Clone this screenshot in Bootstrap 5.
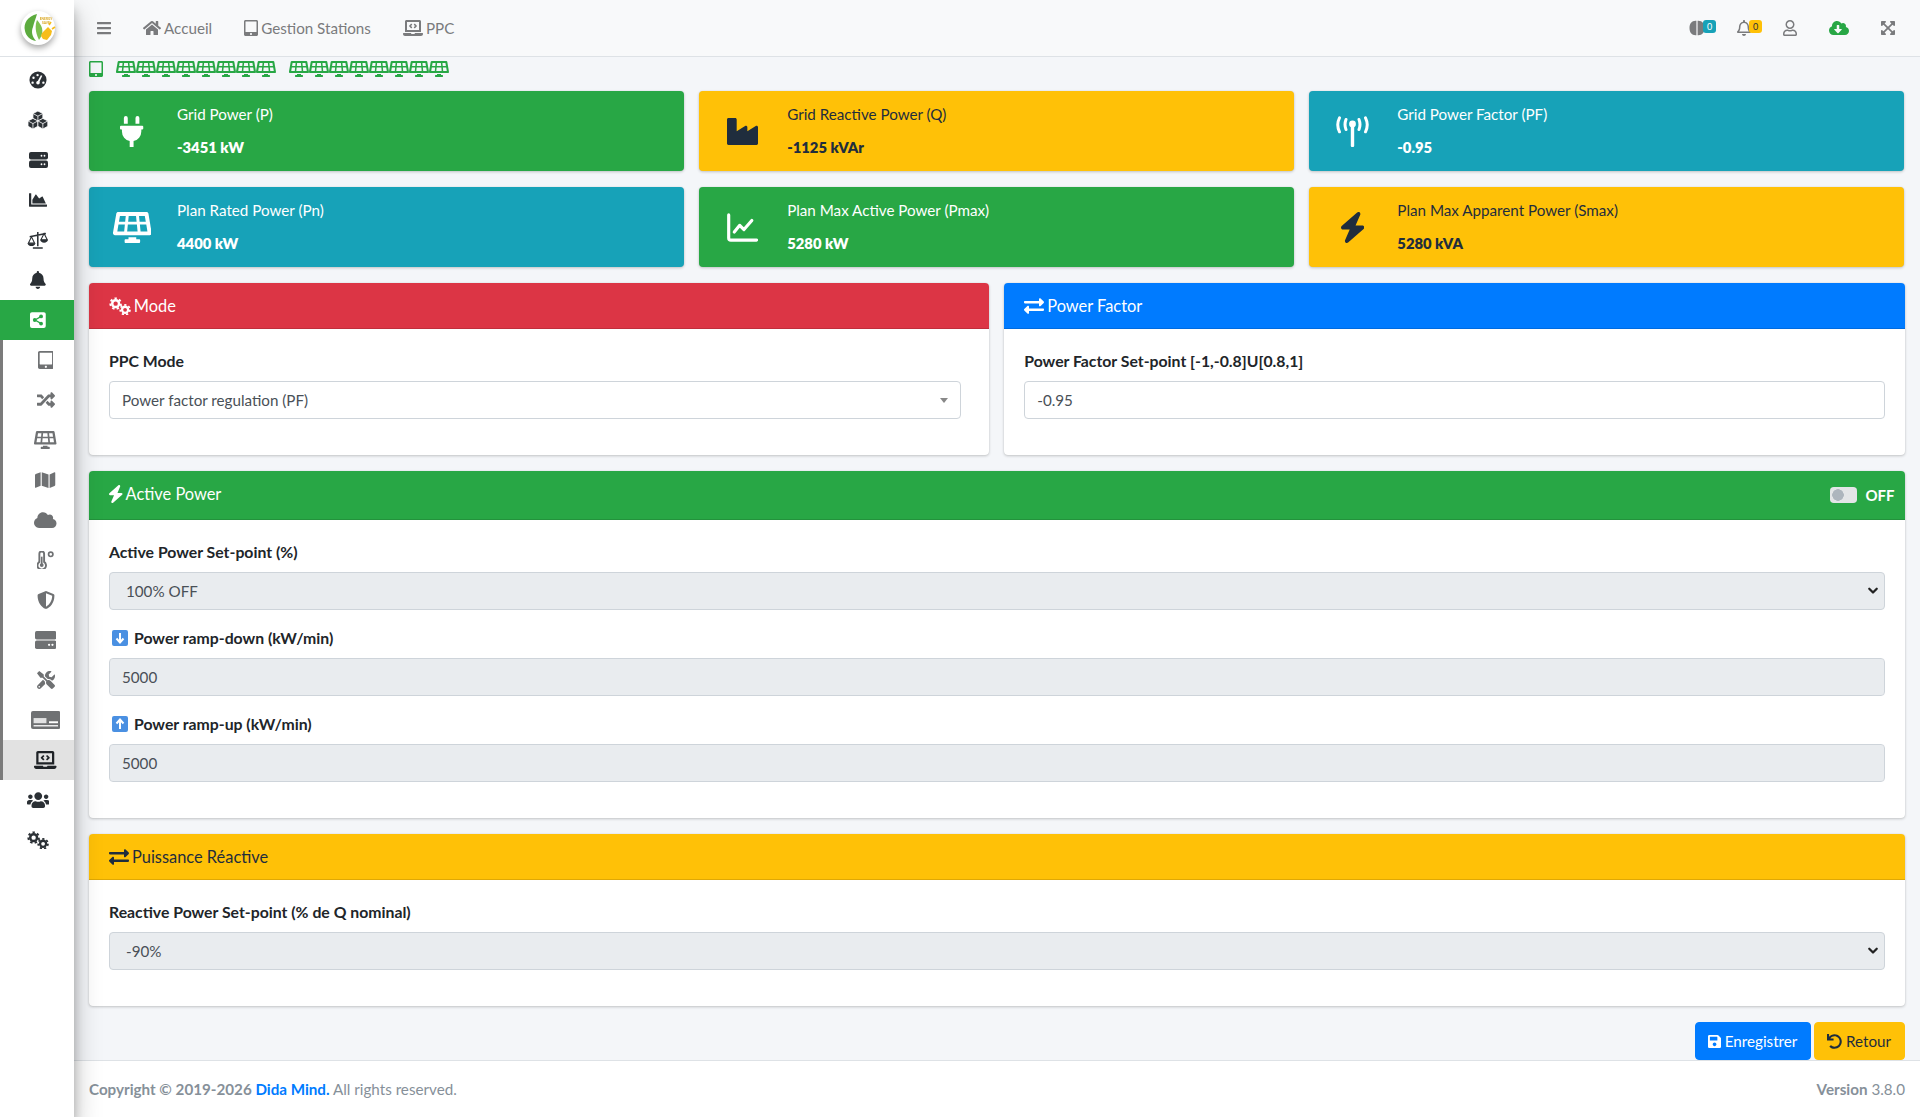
<!DOCTYPE html>
<html lang="fr">
<head>
<meta charset="utf-8">
<title>PPC</title>
<link href="https://cdn.jsdelivr.net/npm/bootstrap@5.3.0/dist/css/bootstrap.min.css" rel="stylesheet">
<style>
html,body{height:100%}
body{font-family:"Lato","Liberation Sans",sans-serif;font-size:15.2px;background:#f4f6f9;color:#212529;overflow:hidden}
.shell{height:1117px}
.rail{width:74px;flex:0 0 74px;background:#fff;box-shadow:0 14px 28px rgba(0,0,0,.25),0 10px 10px rgba(0,0,0,.22);position:relative;z-index:3}
.logo-zone{height:57px;border-bottom:1px solid #dee2e6;margin-bottom:3px;padding-left:2px}
.logo-zone svg{width:36px;height:36px;filter:drop-shadow(0 3px 3px rgba(0,0,0,.35))}
.rail-link{height:40px;padding:0 0 0 2px;color:#2b3035;display:flex;align-items:center;justify-content:center}
.rail-link svg{height:18px;width:auto;display:block}
.rail-link.on{background:#28a745;color:#fff}
.sub-list{border-left:3px solid #7b7b7b}
.sub-list .rail-link{padding-left:14px;color:#6f7173}
.sub-list .rail-link.cur{background:#e2e2e2;color:#1f2327}
.stage{min-width:0}
.topbar{height:57px;padding:0 9px 0 7px;background:#f8f9fa;border-bottom:1px solid #dee2e6}
.topbar .navbar-nav .nav-link{color:#7a7b7d;padding:0 16px;display:flex;align-items:center;gap:3px;position:relative;line-height:24px}
.topbar svg{height:16px;width:auto;display:block}
.topbar .pip{position:absolute;top:0;right:5px;width:13px;height:13px;border-radius:3px;font-size:9px;line-height:13px;text-align:center}
.pip-info{background:#17a2b8;color:#fff}
.pip-warn{background:#ffc107;color:#1f2d3d}
.work{padding:4px 15.5px 0 15px;min-height:0}
.status-line{height:30px;color:#28a745;gap:13px;align-items:flex-start}
.status-line svg{height:16px;width:auto;display:block}
.row.tight{--bs-gutter-x:15px;--bs-gutter-y:16px}
.stat-tile{height:80px;padding:8px;border-radius:4px;box-shadow:0 0 1px rgba(0,0,0,.125),0 1px 3px rgba(0,0,0,.2)}
.tile-icon{width:70px;flex:0 0 70px}
.tile-icon svg{height:31px;width:auto;display:block}
.tile-copy{padding:0 10px;line-height:1.8}
.tile-copy span{line-height:29px}
.tile-copy b{margin-top:4px;display:block;line-height:29px;font-weight:800;font-size:14.8px}
.tone-green{background:#28a745;color:#fff}
.tone-yellow{background:#ffc107;color:#1f2d3d}
.tone-teal{background:#17a2b8;color:#fff}
.tone-red{background:#dc3545;color:#fff}
.tone-blue{background:#007bff;color:#fff}
.panel{--bs-card-border-width:0;--bs-card-border-radius:4px;--bs-card-inner-border-radius:4px;box-shadow:0 0 1px rgba(0,0,0,.125),0 1px 3px rgba(0,0,0,.2);margin-top:16px}
.panel .card-header{padding:12px 20px 12px 20px;border-bottom:1px solid rgba(0,0,0,.125);display:flex;align-items:flex-start;justify-content:space-between}
.panel .card-header.with-toggle{padding-right:10px}
.panel .card-body{padding:20px}
.head-title{font-size:16.4px;line-height:21px;display:flex;align-items:center;gap:3px}
.head-title svg{height:18px;width:auto;display:block}
.head-title svg.wide{height:20px}
.toggle-box{height:24px;gap:8px;font-weight:700;font-size:15px}
.flip{width:27px;height:16px;margin:0;border:0;border-radius:8px;background-color:#e3e5e7;background-image:radial-gradient(circle at 8px 50%,#adb5bd 5.5px,transparent 6px)}
.field{margin-bottom:16px}
.field label{font-weight:700;font-size:15.8px;margin-bottom:8px;line-height:24px;display:flex;align-items:center;gap:6px}
.field label svg{width:16px;height:16px;margin-left:3px}
.form-control,.form-select{height:38px;font-size:15.2px;color:#495057;border-color:#ced4da;border-radius:4px}
.form-control{padding:6px 12px}
.form-select{padding-left:16px;--bs-form-select-bg-img:url("data:image/svg+xml,%3csvg xmlns='http://www.w3.org/2000/svg' viewBox='0 0 16 16'%3e%3cpath fill='none' stroke='%23222' stroke-linecap='round' stroke-linejoin='round' stroke-width='3' d='m3 5 5 5 5-5'/%3e%3c/svg%3e");background-position:right 5px center;background-size:12px 12px}
.form-control:disabled,.form-select:disabled{background-color:#e9ecef;color:#495057}
.pick-box{display:flex;align-items:center;justify-content:space-between;width:calc(100% - 8px)}
.caret{width:0;height:0;border-left:4px solid transparent;border-right:4px solid transparent;border-top:5px solid #888;margin-right:0}
.action-line{margin-top:16px;gap:3px}
.action-line .btn{height:38px;font-size:15.2px;border-radius:4px;display:flex;align-items:center;gap:4px;padding:0 12px}
.action-line svg{height:15px;width:auto;display:block}
.btn-save{--bs-btn-bg:#007bff;--bs-btn-border-color:#007bff;width:116px;justify-content:center}
.btn-back{--bs-btn-bg:#ffc107;--bs-btn-border-color:#ffc107;--bs-btn-color:#1f2d3d;width:91px;justify-content:center}
.foot{height:57px;background:#fff;border-top:1px solid #dee2e6;padding:1px 15px 0;color:#869099}
.foot a{color:#007bff;text-decoration:none;font-weight:700}
</style>
</head>
<body>
<svg width="0" height="0" class="position-absolute">
<defs>
<path id="i-bolt" d="M240.5 224H352C365.3 224 377.3 232.3 381.1 244.7 387.7 257.1 383.1 271.1 373.1 280.1L117.1 504.1C105.8 513.9 89.27 514.7 77.19 506.1 65.1 497.4 60.7 481.5 66.59 467.8L143.5 288H31.1C18.67 288 6.733 279.7 2.044 267.3-2.645 254.9 .8944 240.9 10.93 231.9L266.9 7.918C278.2-1.92 294.7-2.669 306.8 5.111 318.9 14.6 323.3 30.5 317.4 44.2L240.5 224z"/>
<path id="i-home" d="M280.37 148.26L96 300.11V464a16 16 0 0 0 16 16l112.06-.29a16 16 0 0 0 15.92-16V368a16 16 0 0 1 16-16h64a16 16 0 0 1 16 16v95.64a16 16 0 0 0 16 16.05L464 480a16 16 0 0 0 16-16V300L295.67 148.26a12.19 12.19 0 0 0-15.3 0zM571.6 251.47L488 182.56V44.05a12 12 0 0 0-12-12h-56a12 12 0 0 0-12 12v72.61L318.47 43a48 48 0 0 0-61 0L4.34 251.47a12 12 0 0 0-1.6 16.9l25.5 31A12 12 0 0 0 45.15 301l235.22-193.74a12.19 12.19 0 0 1 15.3 0L530.9 301a12 12 0 0 0 16.9-1.6l25.5-31a12 12 0 0 0-1.7-16.93z"/>
<path id="i-bars" d="M16 132h416c8.837 0 16-7.163 16-16V76c0-8.837-7.163-16-16-16H16C7.163 60 0 67.163 0 76v40c0 8.837 7.163 16 16 16zm0 160h416c8.837 0 16-7.163 16-16v-40c0-8.837-7.163-16-16-16H16c-8.837 0-16 7.163-16 16v40c0 8.837 7.163 16 16 16zm0 160h416c8.837 0 16-7.163 16-16v-40c0-8.837-7.163-16-16-16H16c-8.837 0-16 7.163-16 16v40c0 8.837 7.163 16 16 16z"/>
<path id="i-swap" d="M0 168v-16c0-13.255 10.745-24 24-24h360V80c0-21.367 25.899-32.042 40.971-16.971l80 80c9.372 9.373 9.372 24.569 0 33.941l-80 80C409.956 271.982 384 261.456 384 240v-48H24c-13.255 0-24-10.745-24-24zm488 152H128v-48c0-21.314-25.862-32.08-40.971-16.971l-80 80c-9.372 9.373-9.372 24.569 0 33.941l80 80C102.057 463.997 128 453.437 128 432v-48h360c13.255 0 24-10.745 24-24v-16c0-13.255-10.745-24-24-24z"/>
<path id="i-save" d="M433.941 129.941l-83.882-83.882A48 48 0 0 0 316.118 32H48C21.49 32 0 53.49 0 80v352c0 26.51 21.49 48 48 48h352c26.51 0 48-21.49 48-48V163.882a48 48 0 0 0-14.059-33.941zM224 416c-35.346 0-64-28.654-64-64 0-35.346 28.654-64 64-64s64 28.654 64 64c0 35.346-28.654 64-64 64zm96-304.52V212c0 6.627-5.373 12-12 12H76c-6.627 0-12-5.373-12-12V108c0-6.627 5.373-12 12-12h228.52c3.183 0 6.235 1.264 8.485 3.515l3.48 3.48A11.996 11.996 0 0 1 320 111.48z"/>
<path id="i-undo" d="M212.333 224.333H12c-6.627 0-12-5.373-12-12V12C0 5.373 5.373 0 12 0h48c6.627 0 12 5.373 12 12v78.112C117.773 39.279 184.26 7.47 258.175 8.007c136.906.994 246.448 111.623 246.157 248.532C504.041 393.258 393.12 504 256.333 504c-64.089 0-122.496-24.313-166.51-64.215-5.099-4.622-5.334-12.554-.467-17.42l33.967-33.967c4.474-4.474 11.662-4.717 16.401-.525C170.76 415.336 211.58 432 256.333 432c97.268 0 176-78.716 176-176 0-97.267-78.716-176-176-176-58.496 0-110.28 28.476-142.274 72.333h98.274c6.627 0 12 5.373 12 12v48c0 6.627-5.373 12-12 12z"/>
<path id="i-cloud" d="M537.6 226.6c4.1-10.7 6.4-22.4 6.4-34.6 0-53-43-96-96-96-19.7 0-38.1 6-53.3 16.2C367 64.2 315.3 32 256 32c-88.4 0-160 71.6-160 160 0 2.7.1 5.4.2 8.1C40.2 219.8 0 273.2 0 336c0 79.5 64.5 144 144 144h368c70.7 0 128-57.3 128-128 0-61.9-44-113.6-102.4-125.4z"/>
<path id="i-clouddown" d="M537.6 226.6c4.1-10.7 6.4-22.4 6.4-34.6 0-53-43-96-96-96-19.7 0-38.1 6-53.3 16.2C367 64.2 315.3 32 256 32c-88.4 0-160 71.6-160 160 0 2.7.1 5.4.2 8.1C40.2 219.8 0 273.2 0 336c0 79.5 64.5 144 144 144h368c70.7 0 128-57.3 128-128 0-61.9-44-113.6-102.4-125.4zm-132.9 88.7L299.3 420.7c-6.2 6.2-16.4 6.2-22.6 0L171.3 315.3c-10.1-10.1-2.9-27.3 11.3-27.3H248V176c0-8.8 7.2-16 16-16h48c8.8 0 16 7.2 16 16v112h65.4c14.2 0 21.4 17.2 11.3 27.3z"/>
<path id="i-bell" d="M224 512c35.32 0 63.97-28.65 63.97-64H160.03c0 35.35 28.65 64 63.97 64zm215.39-149.71c-19.32-20.76-55.47-51.99-55.47-154.29 0-77.7-54.48-139.9-127.94-155.16V32c0-17.67-14.32-32-31.98-32s-31.98 14.33-31.98 32v20.84C118.56 68.1 64.08 130.3 64.08 208c0 102.3-36.15 133.53-55.47 154.29-6 6.45-8.66 14.16-8.61 21.71.11 16.4 12.98 32 32.1 32h383.8c19.12 0 32-15.6 32.1-32 .05-7.55-2.61-15.27-8.61-21.71z"/>
<path id="i-bello" d="M439.39 362.29c-19.32-20.76-55.47-51.99-55.47-154.29 0-77.7-54.48-139.9-127.94-155.16V32c0-17.67-14.32-32-31.98-32s-31.98 14.33-31.98 32v20.84C118.56 68.1 64.08 130.3 64.08 208c0 102.3-36.15 133.53-55.47 154.29-6 6.45-8.66 14.16-8.61 21.71.11 16.4 12.98 32 32.1 32h383.8c19.12 0 32-15.6 32.1-32 .05-7.55-2.61-15.27-8.61-21.71zM67.53 368c21.22-27.97 44.42-74.33 44.53-159.42 0-.2-.06-.38-.06-.58 0-61.86 50.14-112 112-112s112 50.14 112 112c0 .2-.06.38-.06.58.11 85.1 23.31 131.46 44.53 159.42H67.53zM224 512c35.32 0 63.97-28.65 63.97-64H160.03c0 35.35 28.65 64 63.97 64z"/>
<path id="i-user" d="M313.6 304c-28.7 0-42.5 16-89.6 16-47.1 0-60.8-16-89.6-16C60.2 304 0 364.2 0 438.4V464c0 26.5 21.5 48 48 48h352c26.5 0 48-21.5 48-48v-25.6c0-74.2-60.2-134.4-134.4-134.4zM400 464H48v-25.6c0-47.6 38.8-86.4 86.4-86.4 14.6 0 38.3 16 89.6 16 51.7 0 74.9-16 89.6-16 47.6 0 86.4 38.8 86.4 86.4V464zM224 288c79.5 0 144-64.5 144-144S303.5 0 224 0 80 64.5 80 144s64.5 144 144 144zm0-240c52.9 0 96 43.1 96 96s-43.1 96-96 96-96-43.1-96-96 43.1-96 96-96z"/>
<path id="i-users" d="M96 224c35.3 0 64-28.7 64-64s-28.7-64-64-64-64 28.7-64 64 28.7 64 64 64zm448 0c35.3 0 64-28.7 64-64s-28.7-64-64-64-64 28.7-64 64 28.7 64 64 64zm32 32h-64c-17.6 0-33.5 7.1-45.1 18.6 40.3 22.1 68.9 62 75.1 109.4h66c17.7 0 32-14.3 32-32v-32c0-35.3-28.7-64-64-64zm-256 0c61.9 0 112-50.1 112-112S381.9 32 320 32 208 82.1 208 144s50.1 112 112 112zm76.8 32h-8.3c-20.8 10-43.9 16-68.5 16s-47.6-6-68.5-16h-8.3C179.6 288 128 339.6 128 403.2V432c0 26.5 21.5 48 48 48h288c26.5 0 48-21.5 48-48v-28.8c0-63.6-51.6-115.2-115.2-115.2zm-223.7-13.4C161.5 263.1 145.6 256 128 256H64c-35.3 0-64 28.7-64 64v32c0 17.7 14.3 32 32 32h65.9c6.3-47.4 34.9-87.3 75.2-109.4z"/>
<path id="i-area" d="M500 384c6.6 0 12 5.4 12 12v40c0 6.6-5.4 12-12 12H12c-6.6 0-12-5.4-12-12V76c0-6.6 5.4-12 12-12h40c6.6 0 12 5.4 12 12v308h436zM372.7 159.5L288 216l-85.3-113.7c-5.1-6.8-15.5-6.3-19.9 1L96 248v104h384l-89.9-187.8c-3.2-6.5-11.4-8.7-17.4-4.7z"/>
<path id="i-industry" d="M475.115 163.781L336 252.309v-68.28c0-18.916-20.931-30.399-36.885-20.248L160 252.309V56c0-13.255-10.745-24-24-24H24C10.745 32 0 42.745 0 56v400c0 13.255 10.745 24 24 24h464c13.255 0 24-10.745 24-24V184.029c0-18.917-20.931-30.399-36.885-20.248z"/>
<path id="i-plug" d="M320,32a32,32,0,0,0-64,0v96h64Zm48,128H16A16,16,0,0,0,0,176v32a16,16,0,0,0,16,16H32v32A160.07,160.07,0,0,0,160,412.8V512h64V412.8A160.07,160.07,0,0,0,352,256V224h16a16,16,0,0,0,16-16V176A16,16,0,0,0,368,160ZM128,32a32,32,0,0,0-64,0v96h64Z"/>
<path id="i-solar" d="M431.98 448.01l-47.97.05V416h-128v32.21l-47.98.05c-8.82.01-15.97 7.16-15.98 15.99l-.05 31.73c-.01 8.85 7.17 16.03 16.02 16.02l223.96-.26c8.82-.01 15.97-7.16 15.98-15.98l.04-31.73c.01-8.85-7.17-16.03-16.02-16.02zM585.2 26.74C582.58 11.31 568.99 0 553.06 0H86.93C71 0 57.41 11.31 54.79 26.74-3.32 369.16.04 348.08.03 352c-.03 17.32 14.29 32 32.6 32h574.74c18.23 0 32.51-14.56 32.59-31.79.02-4.08 3.35 16.95-54.76-325.47zM259.83 64h120.33l9.77 96H250.06l9.77-96zm-75.17 256H71.09L90.1 208h105.97l-11.41 112zm16.29-160H98.24l16.29-96h96.19l-9.77 96zm32.82 160l11.4-112h149.65l11.4 112H233.77zm195.5-256h96.19l16.29 96H439.04l-9.77-96zm26.06 256l-11.4-112H549.9l19 112H455.33z"/>
<path id="i-tablet" d="M400 0H48C21.5 0 0 21.5 0 48v416c0 26.5 21.5 48 48 48h352c26.5 0 48-21.5 48-48V48c0-26.5-21.5-48-48-48zM224 480c-17.7 0-32-14.3-32-32s14.3-32 32-32 32 14.3 32 32-14.3 32-32 32zm176-108c0 6.6-5.4 12-12 12H60c-6.6 0-12-5.4-12-12V60c0-6.6 5.4-12 12-12h328c6.6 0 12 5.4 12 12v312z"/>
<path id="i-random" d="M504.971 359.029c9.373 9.373 9.373 24.569 0 33.941l-80 79.984c-15.01 15.01-40.971 4.49-40.971-16.971V416h-58.785a12.004 12.004 0 0 1-8.773-3.812l-70.556-75.596 53.333-57.143L352 336h32v-39.981c0-21.438 25.943-31.998 40.971-16.971l80 79.981zM12 176h84l52.781 56.551 53.333-57.143-70.556-75.596A11.999 11.999 0 0 0 122.785 96H12c-6.627 0-12 5.373-12 12v56c0 6.627 5.373 12 12 12zm372 0v39.984c0 21.46 25.961 31.98 40.971 16.971l80-79.984c9.373-9.373 9.373-24.569 0-33.941l-80-79.981C409.943 24.021 384 34.582 384 56.019V96h-58.785a12.004 12.004 0 0 0-8.773 3.812L96 336H12c-6.627 0-12 5.373-12 12v56c0 6.627 5.373 12 12 12h110.785c3.326 0 6.503-1.381 8.773-3.812L352 176h32z"/>
<path id="i-map" d="M0 117.66v346.32c0 11.32 11.43 19.06 21.94 14.86L160 416V32L20.12 87.95A32.006 32.006 0 0 0 0 117.66zM192 416l192 64V96L192 32v384zM554.06 33.16L416 96v384l139.88-55.95A31.996 31.996 0 0 0 576 394.34V48.02c0-11.32-11.43-19.06-21.94-14.86z"/>
<path id="i-shield" d="M466.5 83.7l-192-80a48.15 48.15 0 0 0-36.9 0l-192 80C27.7 91.1 16 108.6 16 128c0 198.5 114.5 335.7 221.5 380.3 11.8 4.9 25.1 4.9 36.9 0C360.1 472.6 496 349.3 496 128c0-19.4-11.7-36.9-29.5-44.3zM256.1 446.3l-.1-381 175.9 73.3c-3.3 151.4-82.1 261.1-175.8 307.7z"/>
<path id="i-tools" d="M501.1 395.7L384 278.6c-23.1-23.1-57.6-27.6-85.4-13.9L192 158.1V96L64 0 0 64l96 128h62.1l106.6 106.6c-13.6 27.8-9.2 62.3 13.9 85.4l117.1 117.1c14.6 14.6 38.2 14.6 52.7 0l52.7-52.7c14.5-14.6 14.5-38.2 0-52.7zM331.7 225c28.3 0 54.9 11 74.9 31l19.4 19.4c15.8-6.9 30.8-16.5 43.8-29.5 37.1-37.1 49.7-89.3 37.9-136.7-2.2-9-13.5-12.1-20.1-5.5l-74.4 74.4-67.9-11.3L334 98.9l74.4-74.4c6.6-6.6 3.4-17.9-5.7-20.2-47.4-11.7-99.6.9-136.6 37.9-28.5 28.5-41.9 66.1-41.2 103.6l82.1 82.1c8.1-1.9 16.5-2.9 24.7-2.9zm-103.9 82l-56.7-56.7L18.7 402.8c-25 25-25 65.5 0 90.5s65.5 25 90.5 0l123.6-123.6c-7.6-19.9-9.9-41.6-5-62.7zM64 472c-13.2 0-24-10.8-24-24 0-13.3 10.7-24 24-24s24 10.7 24 24c0 13.2-10.7 24-24 24z"/>
<path id="i-laptop" d="M255.03 261.65c6.25 6.25 16.38 6.25 22.63 0l11.31-11.31c6.25-6.25 6.25-16.38 0-22.63L253.25 192l35.71-35.72c6.25-6.25 6.25-16.38 0-22.63l-11.31-11.31c-6.25-6.25-16.38-6.25-22.63 0l-58.34 58.34c-6.25 6.25-6.25 16.38 0 22.63l58.35 58.34zm96.01-11.3l11.31 11.31c6.25 6.25 16.38 6.25 22.63 0l58.34-58.34c6.25-6.25 6.25-16.38 0-22.63l-58.34-58.34c-6.25-6.25-16.38-6.25-22.63 0l-11.31 11.31c-6.25 6.25-6.25 16.38 0 22.63L386.75 192l-35.71 35.72c-6.25 6.25-6.25 16.38 0 22.63zM624 416H381.54c-.74 19.81-14.71 32-32.74 32H288c-18.69 0-33.02-17.47-32.77-32H16c-8.8 0-16 7.2-16 16v16c0 35.2 28.8 64 64 64h512c35.2 0 64-28.8 64-64v-16c0-8.8-7.2-16-16-16zM576 48c0-26.4-21.6-48-48-48H112C85.6 0 64 21.6 64 48v336h512V48zm-64 272H128V64h384v256z"/>
<path id="i-expand" d="M448 344v112a23.94 23.94 0 0 1-24 24H312c-21.39 0-32.09-25.9-17-41l36.2-36.2L224 295.6 116.77 402.9 153 439c15.09 15.1 4.39 41-17 41H24a23.94 23.94 0 0 1-24-24V344c0-21.4 25.89-32.1 41-17l36.19 36.2L184.46 256 77.18 148.7 41 185c-15.1 15.1-41 4.4-41-17V56a23.94 23.94 0 0 1 24-24h112c21.39 0 32.09 25.9 17 41l-36.2 36.2L224 216.4l107.23-107.3L295 73c-15.09-15.1-4.39-41 17-41h112a23.94 23.94 0 0 1 24 24v112c0 21.4-25.89 32.1-41 17l-36.19-36.2L263.54 256l107.28 107.3L407 327.1c15.1-15.2 41-4.5 41 16.9z"/>
<g id="i-cogs">
<circle cx="7" cy="7" r="3.6" fill="none" stroke="currentColor" stroke-width="2.6"/>
<circle cx="7" cy="7" r="5.6" fill="none" stroke="currentColor" stroke-width="2" stroke-dasharray="2.5 2.4"/>
<circle cx="17" cy="13.5" r="3.2" fill="none" stroke="currentColor" stroke-width="2.4"/>
<circle cx="17" cy="13.5" r="5.1" fill="none" stroke="currentColor" stroke-width="1.9" stroke-dasharray="2.3 2.2"/>
</g>
</defs>
</svg>

<div class="shell d-flex">
  <aside class="rail d-flex flex-column">
    <div class="logo-zone d-flex align-items-center justify-content-center">
      <svg viewBox="0 0 36 36">
        <circle cx="18" cy="18" r="17" fill="#fff"/>
        <path d="M17 4C8 6 3 13 5 21c1 5 5 9 11 10-4-5-5-9-3-14 1-5 3-9 4-13z" fill="#5cab3e"/>
        <path d="M17 10c-2 5-2 12 2 20 3-4 4-8 3-12-1-3-3-6-5-8z" fill="#7cc04f"/>
        <path d="M22 23l6-6 4 4-1 4-4 5-4-1-2-3z" fill="#f7bd1b"/>
        <path d="M29 15l2-3M32 19l3-2" stroke="#f7bd1b" stroke-width="1.6"/>
        <text x="26" y="9.5" text-anchor="middle" font-size="3.2" font-weight="700" fill="#d9a51c">ENERGY</text>
        <text x="26" y="13.5" text-anchor="middle" font-size="3.2" font-weight="700" fill="#d9a51c">SAVE</text>
      </svg>
    </div>
    <nav class="nav flex-column flex-nowrap">
      <a class="rail-link nav-link" href="#"><svg viewBox="0 0 20 20" fill="currentColor"><circle cx="10" cy="10" r="9.5"/><path d="M9 12.5L13.2 4.6l1.6.8L10.8 13.500z" fill="#fff"/><circle cx="10" cy="13" r="2" fill="#fff"/><g fill="#fff"><circle cx="4" cy="13" r="1.3"/><circle cx="5" cy="7.500" r="1.300"/><circle cx="9.500" cy="4.500" r="1.300"/><circle cx="16" cy="13" r="1.300"/></g></svg></a>
      <a class="rail-link nav-link" href="#"><svg viewBox="0 0 22 20" fill="currentColor"><g stroke="#fff" stroke-width=".9"><path d="M11 0l5.500 2.800v5.700L11 11.300 5.500 8.500V2.800z"/><path d="M5.500 8.200L11 11v6L5.500 20 0 17v-6z"/><path d="M16.500 8.200L22 11v6l-5.500 3L11 17v-6z"/><path d="M5.500 2.800L11 5.700l5.500-2.900M11 5.700v5.600M0 11l5.500 3 5.500-3M5.500 14v6M11 11l5.500 3 5.500-3M16.500 14v6" fill="none"/></g></svg></a>
      <a class="rail-link nav-link" href="#"><svg viewBox="0 0 19 18" fill="currentColor"><rect y="1" width="19" height="7.500" rx="2"/><rect y="9.500" width="19" height="7.500" rx="2"/><circle cx="12.500" cy="4.750" r=".9" fill="#fff"/><circle cx="15.500" cy="4.750" r=".9" fill="#fff"/><circle cx="12.500" cy="13.250" r=".9" fill="#fff"/><circle cx="15.500" cy="13.250" r=".9" fill="#fff"/></svg></a>
      <a class="rail-link nav-link" href="#"><svg viewBox="0 0 512 512" fill="currentColor"><use href="#i-area"/></svg></a>
      <a class="rail-link nav-link" href="#"><svg viewBox="0 0 24 20" fill="none" stroke="currentColor" stroke-width="1.700"><path d="M12 1v16M6.500 18.800h11M3 6.500L21 2.800"/><path d="M5 6.500L1.500 13.500h7zM19 2.800l-3.500 7h7z" stroke-width="1.200"/><path d="M.8 13.500h8.400c0 2-1.800 3.200-4.200 3.200S.8 15.500.8 13.500zM14.800 9.800h8.400c0 2-1.800 3.200-4.200 3.200s-4.200-1.200-4.200-3.200z" fill="currentColor" stroke="none"/></svg></a>
      <a class="rail-link nav-link" href="#"><svg viewBox="0 0 448 512" fill="currentColor"><use href="#i-bell"/></svg></a>
      <a class="rail-link nav-link on" href="#"><svg viewBox="0 0 448 512"><rect y="32" width="448" height="448" rx="56" fill="#fff"/><g stroke="#28a745" stroke-width="34"><path d="M140 256L310 160M140 256l170 96"/></g><g fill="#28a745"><circle cx="135" cy="256" r="54"/><circle cx="315" cy="155" r="54"/><circle cx="315" cy="357" r="54"/></g></svg></a>
    </nav>
    <nav class="nav flex-column flex-nowrap sub-list">
      <a class="rail-link nav-link" href="#"><svg viewBox="0 0 448 512" fill="currentColor"><use href="#i-tablet"/></svg></a>
      <a class="rail-link nav-link" href="#"><svg viewBox="0 0 512 512" fill="currentColor"><use href="#i-random"/></svg></a>
      <a class="rail-link nav-link" href="#"><svg viewBox="0 0 640 512" fill="currentColor"><use href="#i-solar"/></svg></a>
      <a class="rail-link nav-link" href="#"><svg viewBox="0 0 576 512" fill="currentColor"><use href="#i-map"/></svg></a>
      <a class="rail-link nav-link" href="#"><svg viewBox="0 0 640 512" fill="currentColor"><use href="#i-cloud"/></svg></a>
      <a class="rail-link nav-link" href="#"><svg viewBox="0 0 18 19" fill="none" stroke="currentColor"><path d="M2.500 3a2.500 2.500 0 0 1 5 0v8.500a4.500 4.500 0 1 1-5 0z" stroke-width="2"/><circle cx="5" cy="14.800" r="2" fill="currentColor" stroke="none"/><path d="M5 6v8" stroke-width="1.800"/><circle cx="14.500" cy="3.500" r="2.300" stroke-width="1.800"/></svg></a>
      <a class="rail-link nav-link" href="#"><svg viewBox="0 0 512 512" fill="currentColor"><use href="#i-shield"/></svg></a>
      <a class="rail-link nav-link" href="#"><svg viewBox="0 0 19 16" fill="currentColor"><rect width="19" height="7.500" rx="1.500"/><rect y="8.500" width="19" height="7.500" rx="1.500"/><circle cx="12.500" cy="12.300" r="1" fill="#fff"/><circle cx="15.500" cy="12.300" r="1" fill="#fff"/></svg></a>
      <a class="rail-link nav-link" href="#"><svg viewBox="0 0 512 512" fill="currentColor"><use href="#i-tools"/></svg></a>
      <a class="rail-link nav-link" href="#"><svg viewBox="0 0 23 14" fill="currentColor"><rect width="23" height="14" rx="1.500"/><rect x="2" y="5.500" width="10" height="4" fill="#fff" opacity=".8"/><rect x="14" y="8" width="7" height="1.500" fill="#fff"/><rect x="2" y="11" width="19" height="1" fill="#fff"/></svg></a>
      <a class="rail-link nav-link cur" href="#"><svg viewBox="0 0 640 512" fill="currentColor"><use href="#i-laptop"/></svg></a>
    </nav>
    <nav class="nav flex-column flex-nowrap">
      <a class="rail-link nav-link" href="#"><svg viewBox="0 0 640 512" fill="currentColor"><use href="#i-users"/></svg></a>
      <a class="rail-link nav-link" href="#"><svg viewBox="0 0 23 19" color="#2b3035"><use href="#i-cogs"/></svg></a>
    </nav>
  </aside>

  <div class="stage flex-grow-1 d-flex flex-column">
    <nav class="navbar navbar-expand topbar flex-nowrap justify-content-between">
      <ul class="navbar-nav align-items-center">
        <li class="nav-item"><a class="nav-link" href="#"><svg viewBox="0 0 448 512" fill="currentColor"><use href="#i-bars"/></svg></a></li>
        <li class="nav-item"><a class="nav-link" href="#"><svg viewBox="0 0 576 512" fill="currentColor"><use href="#i-home"/></svg>Accueil</a></li>
        <li class="nav-item"><a class="nav-link" href="#"><svg viewBox="0 0 448 512" fill="currentColor"><use href="#i-tablet"/></svg>Gestion Stations</a></li>
        <li class="nav-item"><a class="nav-link" href="#"><svg viewBox="0 0 640 512" fill="currentColor"><use href="#i-laptop"/></svg>PPC</a></li>
      </ul>
      <ul class="navbar-nav align-items-center">
        <li class="nav-item"><a class="nav-link" href="#"><svg viewBox="0 0 16 16" fill="currentColor"><path d="M7.400 .8C3 .3 .5 3.500 .5 8s2.500 7.700 6.900 7.200zM8.600 .8c4.400-.5 6.900 2.700 6.900 7.200s-2.500 7.700-6.900 7.200z"/></svg><span class="pip pip-info">0</span></a></li>
        <li class="nav-item"><a class="nav-link" href="#"><svg viewBox="0 0 448 512" fill="currentColor"><use href="#i-bello"/></svg><span class="pip pip-warn">0</span></a></li>
        <li class="nav-item"><a class="nav-link" href="#"><svg viewBox="0 0 448 512" fill="currentColor"><use href="#i-user"/></svg></a></li>
        <li class="nav-item"><a class="nav-link" href="#"><svg viewBox="0 0 640 512" fill="#28a745"><use href="#i-clouddown"/></svg></a></li>
        <li class="nav-item"><a class="nav-link" href="#"><svg viewBox="0 0 448 512" fill="currentColor"><use href="#i-expand"/></svg></a></li>
      </ul>
    </nav>

    <main class="work flex-grow-1">
      <div class="status-line d-flex">
        <svg viewBox="0 0 448 512" fill="currentColor"><use href="#i-tablet"/></svg>
        <div class="d-flex">
          <svg viewBox="0 0 640 512" fill="currentColor"><use href="#i-solar"/></svg><svg viewBox="0 0 640 512" fill="currentColor"><use href="#i-solar"/></svg><svg viewBox="0 0 640 512" fill="currentColor"><use href="#i-solar"/></svg><svg viewBox="0 0 640 512" fill="currentColor"><use href="#i-solar"/></svg><svg viewBox="0 0 640 512" fill="currentColor"><use href="#i-solar"/></svg><svg viewBox="0 0 640 512" fill="currentColor"><use href="#i-solar"/></svg><svg viewBox="0 0 640 512" fill="currentColor"><use href="#i-solar"/></svg><svg viewBox="0 0 640 512" fill="currentColor"><use href="#i-solar"/></svg>
        </div>
        <div class="d-flex">
          <svg viewBox="0 0 640 512" fill="currentColor"><use href="#i-solar"/></svg><svg viewBox="0 0 640 512" fill="currentColor"><use href="#i-solar"/></svg><svg viewBox="0 0 640 512" fill="currentColor"><use href="#i-solar"/></svg><svg viewBox="0 0 640 512" fill="currentColor"><use href="#i-solar"/></svg><svg viewBox="0 0 640 512" fill="currentColor"><use href="#i-solar"/></svg><svg viewBox="0 0 640 512" fill="currentColor"><use href="#i-solar"/></svg><svg viewBox="0 0 640 512" fill="currentColor"><use href="#i-solar"/></svg><svg viewBox="0 0 640 512" fill="currentColor"><use href="#i-solar"/></svg>
        </div>
      </div>

      <div class="row tight">
        <div class="col-4"><div class="stat-tile tone-green d-flex">
          <div class="tile-icon d-flex align-items-center justify-content-center"><svg viewBox="0 0 384 512" fill="currentColor"><use href="#i-plug"/></svg></div>
          <div class="tile-copy d-flex flex-column justify-content-center"><span>Grid Power (P)</span><b>-3451 kW</b></div>
        </div></div>
        <div class="col-4"><div class="stat-tile tone-yellow d-flex">
          <div class="tile-icon d-flex align-items-center justify-content-center"><svg viewBox="0 0 512 512" fill="currentColor"><use href="#i-industry"/></svg></div>
          <div class="tile-copy d-flex flex-column justify-content-center"><span>Grid Reactive Power (Q)</span><b>-1125 kVAr</b></div>
        </div></div>
        <div class="col-4"><div class="stat-tile tone-teal d-flex">
          <div class="tile-icon d-flex align-items-center justify-content-center"><svg viewBox="0 0 35 31" fill="none" stroke="currentColor" stroke-linecap="round" stroke-width="3"><path d="M17.500 8v21.500" stroke-width="3.400"/><circle cx="17.500" cy="8" r="3.400" fill="currentColor" stroke="none"/><path d="M11 3.500q-2 5 0 10M24 3.500q2 5 0 10M4.500 1.800q-3.500 7 0 14M30.500 1.800q3.500 7 0 14"/></svg></div>
          <div class="tile-copy d-flex flex-column justify-content-center"><span>Grid Power Factor (PF)</span><b>-0.95</b></div>
        </div></div>
        <div class="col-4"><div class="stat-tile tone-teal d-flex">
          <div class="tile-icon d-flex align-items-center justify-content-center"><svg viewBox="0 0 640 512" fill="currentColor"><use href="#i-solar"/></svg></div>
          <div class="tile-copy d-flex flex-column justify-content-center"><span>Plan Rated Power (Pn)</span><b>4400 kW</b></div>
        </div></div>
        <div class="col-4"><div class="stat-tile tone-green d-flex">
          <div class="tile-icon d-flex align-items-center justify-content-center"><svg viewBox="0 0 512 512" fill="none" stroke="currentColor" stroke-linecap="round" stroke-linejoin="round" stroke-width="52"><path d="M28 48v380q0 36 36 36h424"/><path d="M120 330l90-110 70 70 130-150"/></svg></div>
          <div class="tile-copy d-flex flex-column justify-content-center"><span>Plan Max Active Power (Pmax)</span><b>5280 kW</b></div>
        </div></div>
        <div class="col-4"><div class="stat-tile tone-yellow d-flex">
          <div class="tile-icon d-flex align-items-center justify-content-center"><svg viewBox="0 0 384 512" fill="currentColor"><use href="#i-bolt"/></svg></div>
          <div class="tile-copy d-flex flex-column justify-content-center"><span>Plan Max Apparent Power (Smax)</span><b>5280 kVA</b></div>
        </div></div>
      </div>

      <div class="row tight">
        <div class="col-6">
          <div class="card panel">
            <div class="card-header tone-red"><div class="head-title"><svg viewBox="0 0 23 19"><use href="#i-cogs"/></svg>Mode</div></div>
            <div class="card-body">
              <div class="field"><label>PPC Mode</label>
                <div class="form-control pick-box"><span>Power factor regulation (PF)</span><i class="caret"></i></div>
              </div>
            </div>
          </div>
        </div>
        <div class="col-6">
          <div class="card panel">
            <div class="card-header tone-blue"><div class="head-title"><svg class="wide" viewBox="0 0 512 512" fill="currentColor"><use href="#i-swap"/></svg>Power Factor</div></div>
            <div class="card-body">
              <div class="field"><label>Power Factor Set-point [-1,-0.8]U[0.8,1]</label>
                <input class="form-control" type="text" value="-0.95">
              </div>
            </div>
          </div>
        </div>
      </div>

      <div class="card panel">
        <div class="card-header tone-green with-toggle">
          <div class="head-title"><svg viewBox="0 0 384 512" fill="currentColor"><use href="#i-bolt"/></svg>Active Power</div>
          <div class="toggle-box d-flex align-items-center"><input class="form-check-input flip" type="checkbox" role="switch"><span>OFF</span></div>
        </div>
        <div class="card-body">
          <div class="field"><label>Active Power Set-point (%)</label>
            <select class="form-select" disabled><option>100% OFF</option></select>
          </div>
          <div class="field"><label><svg viewBox="0 0 16 16"><rect width="16" height="16" rx="2" fill="#4a90e2"/><path d="M8 3v9M4.500 8.500L8 12.500l3.500-4" fill="none" stroke="#fff" stroke-width="2"/></svg>Power ramp-down (kW/min)</label>
            <input class="form-control" type="text" value="5000" disabled>
          </div>
          <div class="field"><label><svg viewBox="0 0 16 16"><rect width="16" height="16" rx="2" fill="#4a90e2"/><path d="M8 13V4M4.500 7.500L8 3.500l3.500 4" fill="none" stroke="#fff" stroke-width="2"/></svg>Power ramp-up (kW/min)</label>
            <input class="form-control" type="text" value="5000" disabled>
          </div>
        </div>
      </div>

      <div class="card panel">
        <div class="card-header tone-yellow"><div class="head-title"><svg class="wide" viewBox="0 0 512 512" fill="currentColor"><use href="#i-swap"/></svg>Puissance Réactive</div></div>
        <div class="card-body">
          <div class="field"><label>Reactive Power Set-point (% de Q nominal)</label>
            <select class="form-select" disabled><option>-90%</option></select>
          </div>
        </div>
      </div>

      <div class="action-line d-flex justify-content-end">
        <button class="btn btn-primary btn-save" type="button"><svg viewBox="0 0 448 512" fill="currentColor"><use href="#i-save"/></svg>Enregistrer</button>
        <button class="btn btn-warning btn-back" type="button"><svg viewBox="0 0 512 512" fill="currentColor"><use href="#i-undo"/></svg>Retour</button>
      </div>
    </main>

    <footer class="foot d-flex align-items-center justify-content-between">
      <div><b>Copyright © 2019-2026 <a href="#">Dida Mind.</a></b> All rights reserved.</div>
      <div><b>Version</b> 3.8.0</div>
    </footer>
  </div>
</div>
<script src="https://cdn.jsdelivr.net/npm/bootstrap@5.3.0/dist/js/bootstrap.bundle.min.js"></script>
</body>
</html>
